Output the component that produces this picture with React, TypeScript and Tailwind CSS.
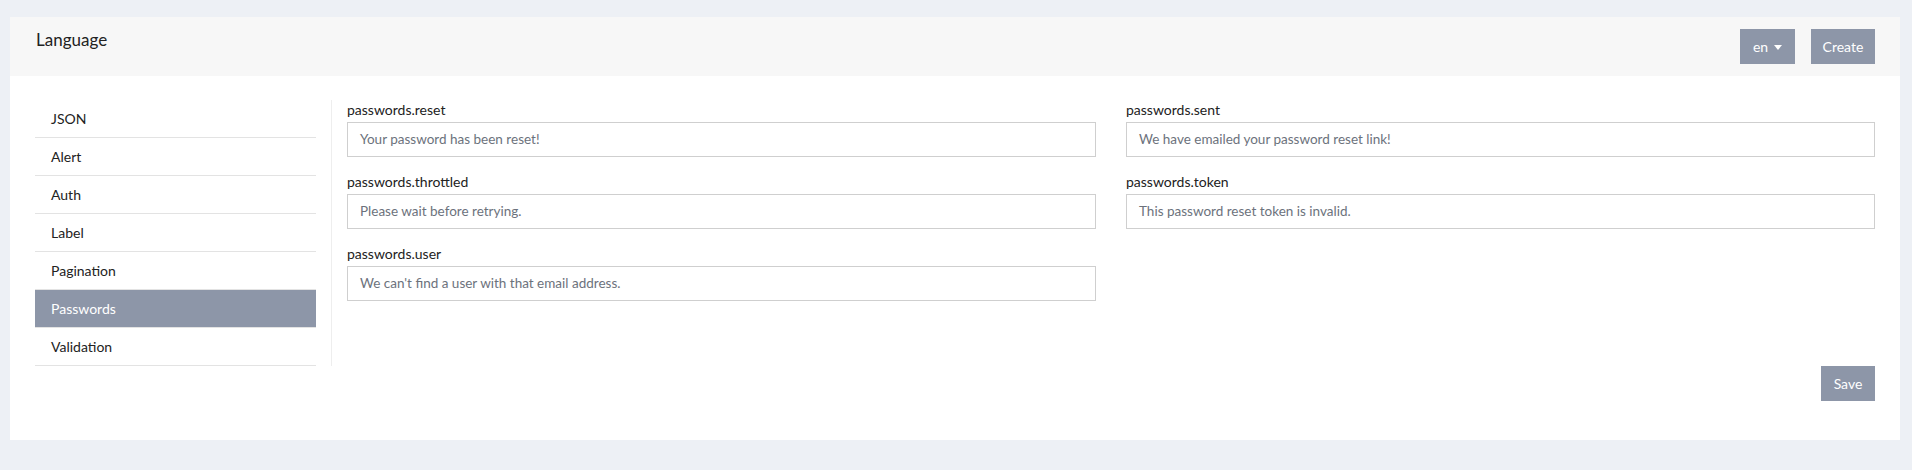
import React from "react";

const items = ["JSON", "Alert", "Auth", "Label", "Pagination", "Passwords", "Validation"];

const fields: [string, string][] = [
  ["passwords.reset", "Your password has been reset!"],
  ["passwords.sent", "We have emailed your password reset link!"],
  ["passwords.throttled", "Please wait before retrying."],
  ["passwords.token", "This password reset token is invalid."],
  ["passwords.user", "We can't find a user with that email address."],
];

export default function App() {
  return (
    <div
      className="min-h-[470px] bg-[#edf0f5] pt-[17px] pl-[10px] pr-[12px] text-[#333]"
      style={{ fontFamily: '"Lato", "Noto Sans", sans-serif' }}
    >
      <div className="bg-white">
        <div className="flex h-[59px] items-center justify-between bg-[#f7f7f7] pl-[26px] pr-[25px]">
          <div className="-mt-[13px] text-[17px] text-[#222]">Language</div>
          <div className="flex gap-[16px]">
            <button className="flex h-[35px] w-[55px] items-center justify-center gap-[6px] bg-[#8d96a8] text-[14px] text-white">
              en
              <span className="mt-[1px] h-0 w-0 border-x-[4px] border-t-[5px] border-x-transparent border-t-white" />
            </button>
            <button className="h-[35px] w-[64px] bg-[#8d96a8] text-[14px] text-white">Create</button>
          </div>
        </div>
        <div className="pt-[24px] pb-[39px] pl-[25px] pr-[25px]">
          <div className="flex">
            <div className="w-[297px] shrink-0 border-r border-[#eeeeee] pr-[15px]">
              {items.map((it) => (
                <div
                  key={it}
                  className={
                    it === "Passwords"
                      ? "flex h-[38px] items-center border-b border-[#e3e3e3] bg-[#8d96a8] pl-[16px] text-[14px] text-white"
                      : "flex h-[38px] items-center border-b border-[#e3e3e3] pl-[16px] text-[14px] text-[#222]"
                  }
                >
                  {it}
                </div>
              ))}
            </div>
            <div className="flex-1 pl-[15px]">
              <div className="grid grid-cols-2 gap-x-[30px] gap-y-[15px]">
                {fields.map(([k, v]) => (
                  <div key={k}>
                    <div className="mb-[2px] h-[20px] text-[14px] leading-[20px] text-[#222]">{k}</div>
                    <div className="flex h-[35px] items-center border border-[#cfcfcf] pl-[12px] text-[13.5px] text-[#6c727c]">
                      {v}
                    </div>
                  </div>
                ))}
              </div>
            </div>
          </div>
          <div className="flex justify-end">
            <button className="h-[35px] w-[54px] bg-[#8d96a8] text-[14px] text-white">Save</button>
          </div>
        </div>
      </div>
    </div>
  );
}
